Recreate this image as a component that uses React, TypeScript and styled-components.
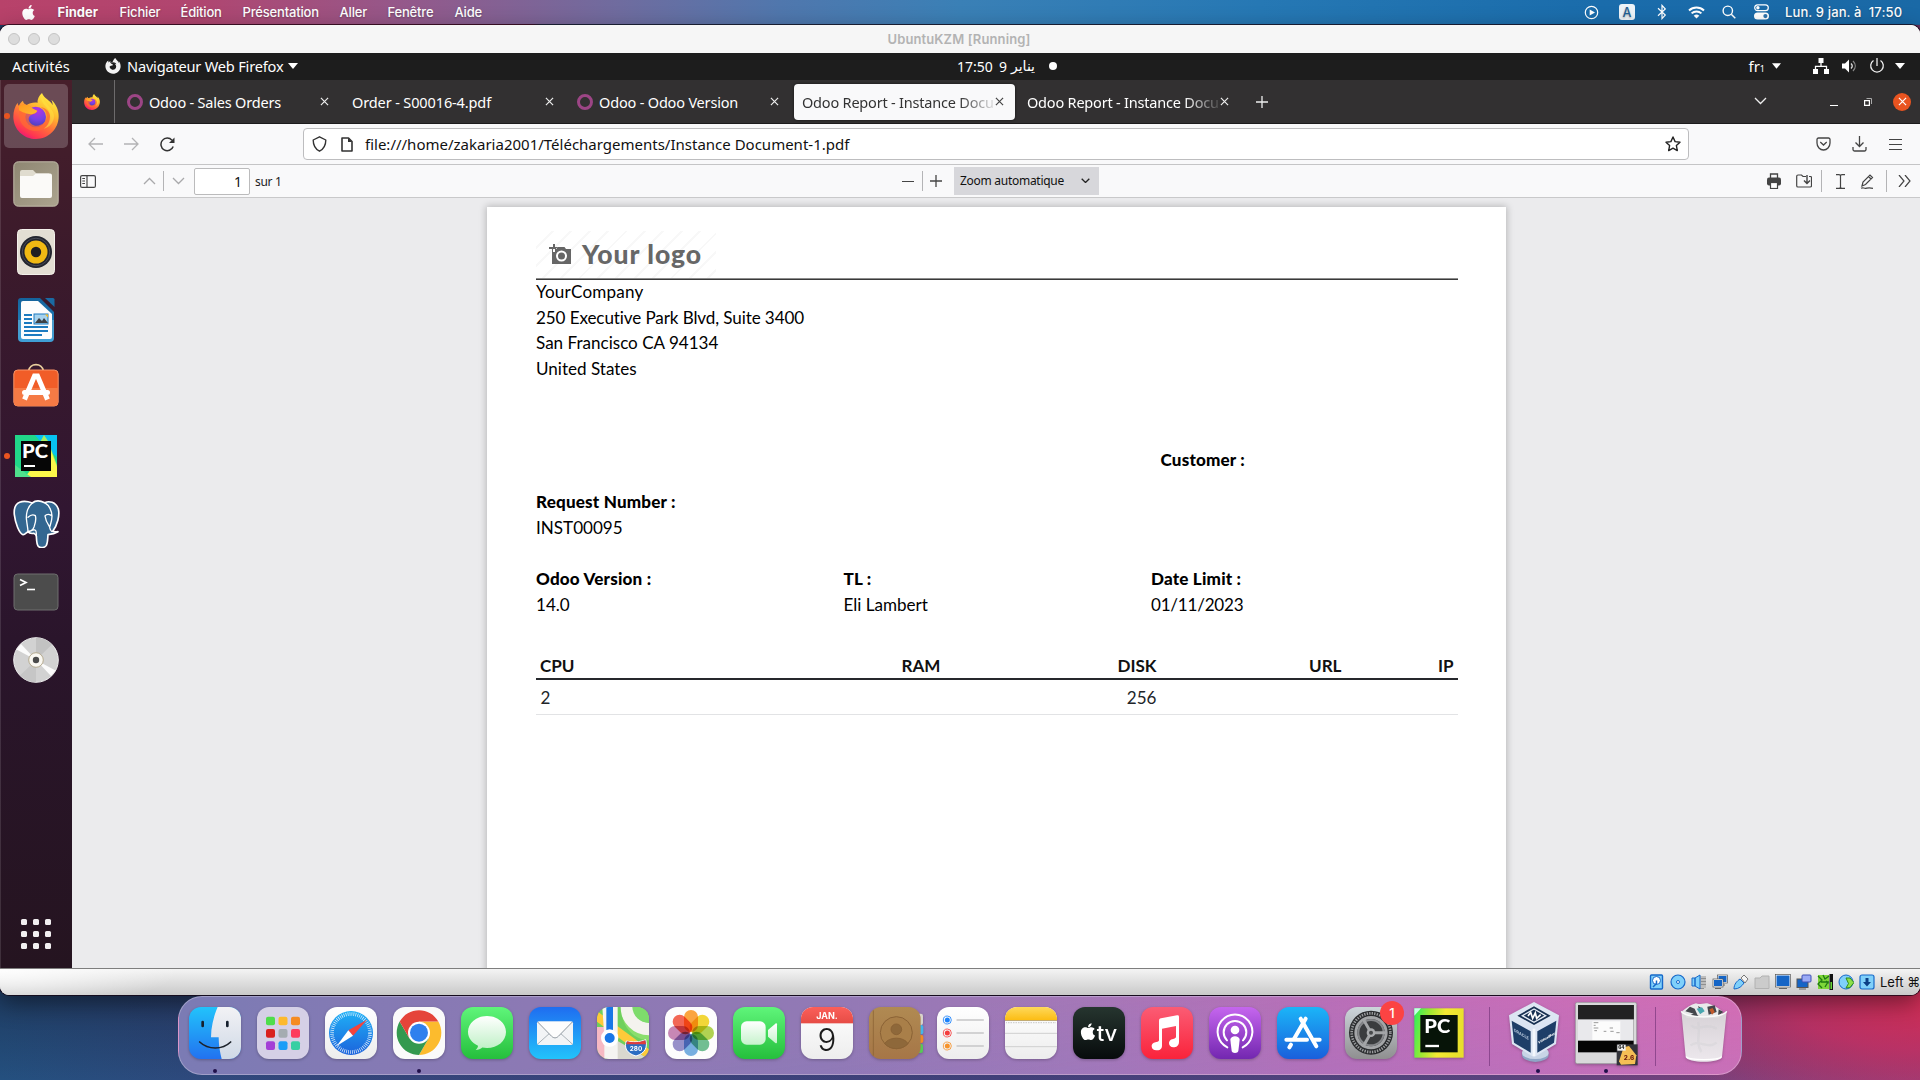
import React from 'react';
import styled, { createGlobalStyle, css } from 'styled-components';
import { FaApple, FaFirefoxBrowser } from 'react-icons/fa';

const mac = `Inter, "Liberation Sans", sans-serif`;
const ubuntu = `"Noto Sans", "Open Sans", sans-serif`;
const lato = `Lato, "Open Sans", sans-serif`;

const Global = createGlobalStyle`
  * { box-sizing: border-box; }
  body { margin: 0; background: #2b3560; overflow: hidden; }
  svg { display: block; flex: none; }
`;

/* ---------- shared pieces ---------- */

const Desktop = styled.div`
  width: 1920px;
  height: 1080px;
  overflow: hidden;
  display: flex;
  flex-direction: column;
  background:
    radial-gradient(330px 110px at 1935px 1000px, #d42e56 0%, rgba(205, 47, 98, 0.75) 45%, rgba(205, 47, 98, 0) 100%),
    linear-gradient(180deg, rgba(20, 20, 40, 0.35) 990px, rgba(20, 20, 40, 0) 1080px),
    linear-gradient(90deg, #24507f 0, #33467c 300px, #41407a 1000px, #5a447f 1500px, #7c417c 1740px, #8f3f78 1920px);
`;

const Label = styled.span<{ $w?: number; $size: number; $ls?: number; $weight?: number; $color?: string; $ml?: number; $font?: string }>`
  flex: none;
  display: block;
  white-space: nowrap;
  font-family: ${(p) => p.$font ?? ubuntu};
  font-size: ${(p) => p.$size}px;
  font-weight: ${(p) => p.$weight ?? 400};
  letter-spacing: ${(p) => p.$ls ?? 0}px;
  color: ${(p) => p.$color ?? '#fff'};
  margin-left: ${(p) => p.$ml ?? 0}px;
  ${(p) => p.$w && css`width: ${p.$w}px;`}
`;

const Glyph = styled.span<{ $w: number; $ml?: number }>`
  flex: none;
  width: ${(p) => p.$w}px;
  margin-left: ${(p) => p.$ml ?? 0}px;
  display: flex;
  align-items: center;
  justify-content: center;
`;

const Spacer = styled.div<{ $w?: number }>`
  flex: ${(p) => (p.$w ? 'none' : 1)};
  ${(p) => p.$w && css`width: ${p.$w}px;`}
`;

const Draw = ({ w, h = w, vb, children }: { w: number; h?: number; vb?: string; children: React.ReactNode }) => (
  <svg width={w} height={h} viewBox={vb ?? `0 0 ${w} ${h}`} fill="none">
    {children}
  </svg>
);

/* ---------- mac menu bar ---------- */

const MacBar = styled.header`
  height: 25px;
  flex: none;
  display: flex;
  align-items: center;
  padding: 0 17px 1px 20px;
  color: #fff;
  text-shadow: 0 1px 2px rgba(0, 0, 0, 0.3);
  background:
    linear-gradient(90deg, #b92b4e 0, #a72a55 532px, #2c7393 540px, #1f5f92 1920px) 0 24px / 100% 1px no-repeat,
    linear-gradient(90deg, #b8426a 0, #b04670 200px, #95588a 400px, #6f6c9f 620px, #5077ad 780px, #3a80b6 960px, #2678b4 1260px, #1a6cab 1600px, #1a69a6 1920px);
`;
const MenuItem = styled.span<{ $w: number; $strong?: boolean; $first?: boolean }>`
  flex: none;
  width: ${(p) => p.$w}px;
  margin-left: ${(p) => (p.$strong ? 21.5 : 0)}px;
  white-space: nowrap;
  font-family: ${mac};
  font-size: 13px;
  font-weight: ${(p) => (p.$strong ? 700 : 500)};
  letter-spacing: ${(p) => (p.$strong ? 0 : -0.18)}px;
`;

const MacBarIcons = () => (
  <>
    <Glyph $w={16}>
      <Draw w={15}>
        <circle cx="7.5" cy="7.5" r="6.2" stroke="#fff" strokeWidth="1.2" />
        <path d="M5.7 4.5 11 7.5 5.7 10.5z" fill="#fff" />
      </Draw>
    </Glyph>
    <Glyph $w={16} $ml={20}>
      <Draw w={16}>
        <rect width="16" height="16" rx="3" fill="#eef4f9" />
        <text x="8" y="12.6" textAnchor="middle" fontSize="12.5" fontWeight="500" fontFamily="Inter, sans-serif" fill="#1f5f93">A</text>
      </Draw>
    </Glyph>
    <Glyph $w={16} $ml={19}>
      <Draw w={10} h={16}>
        <path d="M1 4.3 8.3 11 5 14.6V1.4L8.3 5 1 11.7" stroke="#fff" strokeWidth="1.2" />
      </Draw>
    </Glyph>
    <Glyph $w={18} $ml={17}>
      <Draw w={17} h={13}>
        <path d="M1 4.4a11 11 0 0 1 15 0" stroke="#fff" strokeWidth="2" />
        <path d="M3.6 7.4a7 7 0 0 1 9.800 0" stroke="#fff" strokeWidth="2" />
        <path d="M5.700 9.700a4.200 4.200 0 0 1 5.600 0L8.500 12.600z" fill="#fff" />
      </Draw>
    </Glyph>
    <Glyph $w={16} $ml={16}>
      <Draw w={14}>
        <circle cx="5.8" cy="5.8" r="4.7" stroke="#fff" strokeWidth="1.4" />
        <path d="m9.300 9.300 4 4" stroke="#fff" strokeWidth="1.5" />
      </Draw>
    </Glyph>
    <Glyph $w={16} $ml={16}>
      <Draw w={15} h={16}>
        <rect x=".7" y=".9" width="13.6" height="5.8" rx="2.9" stroke="#fff" strokeWidth="1.2" />
        <circle cx="3.9" cy="3.8" r="1.7" fill="#fff" />
        <rect y="8.6" width="15" height="7" rx="3.5" fill="#fff" />
        <circle cx="11.4" cy="12.1" r="2.1" fill="#2f74ad" />
      </Draw>
    </Glyph>
  </>
);

/* ---------- VM window ---------- */

const VmWindow = styled.section`
  flex: none;
  height: 970px;
  display: flex;
  flex-direction: column;
  border-radius: 9px;
  overflow: hidden;
  background: #fff;
  box-shadow: 0 0 0 1px rgba(20, 5, 20, 0.75), 0 8px 24px rgba(0, 0, 0, 0.45);
`;

const TitleBar = styled.div`
  height: 28px;
  flex: none;
  display: grid;
  grid-template-columns: 1fr auto 1fr;
  align-items: center;
  padding: 0 10px 1px 8px;
  background: #f6f6f6;
`;

const Lights = styled.div`
  display: flex;
  gap: 8px;
`;
const Light = styled.i`
  width: 12px;
  height: 12px;
  border-radius: 50%;
  background: #dddddd;
  border: 1px solid #c4c4c4;
`;

const GnomeBar = styled.div`
  height: 27px;
  flex: none;
  display: grid;
  grid-template-columns: 1fr auto 1fr;
  align-items: center;
  padding-bottom: 1px;
  background: #1d1d1d;
`;
const GnomeSide = styled.div<{ $end?: boolean }>`
  display: flex;
  align-items: center;
  justify-content: ${(p) => (p.$end ? 'flex-end' : 'flex-start')};
  padding: ${(p) => (p.$end ? '0 15px 0 0' : '0 0 0 12px')};
`;
const GnomeClock = styled.div`
  display: flex;
  align-items: center;
  padding-left: 94px;
`;
const LayoutIndex = styled.small`
  font-size: 9px;
`;

const Workspace = styled.div`
  flex: 1;
  min-height: 0;
  display: flex;
`;

const Launcher = styled.nav`
  width: 72px;
  flex: none;
  display: flex;
  flex-direction: column;
  align-items: center;
  gap: 4px;
  padding: 4px 0 2px;
  background: linear-gradient(180deg, #471f2b 0, #3b1a2b 180px, #311631 430px, #2a152b 560px, #251420 888px);
  box-shadow: inset 1px 0 0 rgba(255, 255, 255, 0.12);
`;
const LauncherTile = styled.div<{ $active?: boolean; $running?: boolean; $lift?: number }>`
  position: relative;
  width: 64px;
  height: 64px;
  border-radius: 5px;
  display: grid;
  place-items: center;
  padding-bottom: ${(p) => p.$lift ?? 0}px;
  background: ${(p) => (p.$active ? 'rgba(255,255,255,.2)' : 'transparent')};
  ${(p) =>
    p.$running &&
    css`
      &::before {
        content: '';
        position: absolute;
        left: 0;
        top: 29px;
        width: 6px;
        height: 6px;
        border-radius: 50%;
        background: #e95420;
      }
    `}
`;
const AppsGrid = styled.div`
  display: grid;
  grid-template-columns: repeat(3, 6px);
  gap: 6px;
  margin-bottom: 17px;
`;
const AppsDot = styled.i`
  height: 6px;
  border-radius: 1.5px;
  background: #f2eff1;
`;

const Browser = styled.div`
  flex: 1;
  min-width: 0;
  display: flex;
  flex-direction: column;
`;

const TabStrip = styled.div`
  height: 44px;
  flex: none;
  display: flex;
  align-items: center;
  padding-right: 9px;
  background: #323031;
  border-bottom: 1px solid #1c1b1c;
`;
const PinnedTab = styled.div`
  width: 43px;
  align-self: stretch;
  display: flex;
  align-items: center;
  padding-left: 12px;
  border-right: 1px solid #6d6b6c;
`;
const Tab = styled.div<{ $active?: boolean }>`
  width: ${(p) => (p.$active ? 221 : 225)}px;
  height: 36px;
  flex: none;
  display: flex;
  align-items: center;
  margin-left: ${(p) => (p.$active ? 4 : 0)}px;
  padding: 0 11px 0 ${(p) => (p.$active ? 8 : 12)}px;
  border-radius: 4px;
  background: ${(p) => (p.$active ? '#f9f9fa' : 'transparent')};
  box-shadow: ${(p) => (p.$active ? '0 0 3px rgba(0,0,0,.6)' : 'none')};
`;
const TabTitle = styled.div<{ $fade?: boolean }>`
  flex: 1;
  min-width: 0;
  ${(p) => p.$fade && css`mask-image: linear-gradient(90deg, #000 calc(100% - 36px), rgba(0, 0, 0, 0.15) calc(100% - 2px));`}
`;
const OdooRing = styled.i`
  width: 16px;
  height: 16px;
  flex: none;
  margin-right: 6px;
  border: 3.5px solid #9c4585;
  border-radius: 50%;
`;
const CloseDisc = styled.span`
  width: 18px;
  height: 18px;
  border-radius: 50%;
  display: grid;
  place-items: center;
  background: #e95420;
`;

const NavBar = styled.div`
  height: 41px;
  flex: none;
  display: flex;
  align-items: center;
  padding-right: 17px;
  background: #f9f9fa;
  border-bottom: 1px solid #c5c5c6;
`;
const UrlField = styled.div`
  width: 1386px;
  height: 32px;
  margin-left: 128px;
  display: flex;
  align-items: center;
  padding: 0 7px;
  background: #fff;
  border: 1px solid #bdbdbf;
  border-radius: 4px;
`;

const PdfBar = styled.div`
  height: 33px;
  flex: none;
  display: flex;
  align-items: center;
  padding-right: 9px;
  background: #f9f9fa;
  border-bottom: 1px solid #c9c9ca;
`;
const Rule = styled.i<{ $ml: number; $h?: number }>`
  width: 1px;
  height: ${(p) => p.$h ?? 20}px;
  margin-left: ${(p) => p.$ml}px;
  background: #b4b4b6;
`;
const PageInput = styled.div`
  width: 56px;
  height: 27px;
  margin-left: 9px;
  display: flex;
  align-items: center;
  justify-content: flex-end;
  padding-right: 7px;
  border: 1px solid #bbbbbc;
  border-radius: 2px;
  background: #fff;
`;
const ZoomSelect = styled.div`
  width: 145px;
  height: 28px;
  margin-left: 12px;
  display: flex;
  align-items: center;
  justify-content: space-between;
  padding: 0 9px 1px 6px;
  background: #d7d7db;
`;

const Viewer = styled.div`
  flex: 1;
  min-height: 0;
  overflow: hidden;
  padding: 9px 0 0 415px;
  background: #ebebed;
`;
const Sheet = styled.article`
  width: 1019px;
  height: 1400px;
  padding: 24px 48px 0 49px;
  background: #fff;
  box-shadow: 0 0 7px 1px rgba(0, 0, 0, 0.22);
`;
const LogoBox = styled.div`
  width: 180px;
  height: 47px;
  display: flex;
  align-items: center;
  padding: 0 0 2px 13px;
  background: repeating-linear-gradient(135deg, #fff 0 11px, #f8f8f8 11px 13px);
`;
const Divider = styled.hr`
  width: 922px;
  margin: 0 0 -1px;
  border: 0;
  height: 2px;
  background: linear-gradient(180deg, #8c8c8c 50%, #3a3a3a 50%);
`;
const DocLine = styled.p<{ $bold?: boolean; $ls?: number }>`
  margin: 0;
  height: 25.6px;
  line-height: 25.6px;
  white-space: nowrap;
  font-family: ${lato};
  font-size: 17.07px;
  font-weight: ${(p) => (p.$bold ? 900 : 400)};
  font-variant-ligatures: none;
  letter-spacing: ${(p) => p.$ls ?? (p.$bold ? 0.18 : 0)}px;
  color: #000;
`;
const CustomerRow = styled.div`
  margin: 66px 0 0 624.5px;
`;
const RequestRow = styled.div`
  margin-top: 16px;
`;
const InfoGrid = styled.div`
  margin-top: 26px;
  display: grid;
  grid-template-columns: 307.5px 307.5px 1fr;
`;
const SpecTable = styled.table`
  width: 922px;
  margin-top: 32px;
  border-collapse: collapse;
  table-layout: fixed;
  font-family: ${lato};
  font-size: 17.07px;
  color: #111;
`;
const Th = styled.th<{ $w: number; $left?: boolean }>`
  width: ${(p) => p.$w}px;
  height: 30px;
  padding: 0 ${(p) => (p.$left ? 4 : 4.5)}px;
  text-align: ${(p) => (p.$left ? 'left' : 'right')};
  vertical-align: bottom;
  font-weight: 700;
  line-height: 24px;
  border-bottom: 2px solid #26282c;
`;
const Td = styled.td<{ $left?: boolean }>`
  height: 35px;
  padding: 0 4.5px;
  text-align: ${(p) => (p.$left ? 'left' : 'right')};
  border-bottom: 1px solid #e2e3e5;
  color: #212529;
`;

const StatusBar = styled.footer`
  height: 27px;
  flex: none;
  display: flex;
  align-items: center;
  justify-content: flex-end;
  gap: 5px;
  padding-right: 1px;
  border-top: 1px solid #7e7e7e;
  background:
    radial-gradient(180px 40px at 0 0, rgba(255, 255, 255, 0.9), rgba(255, 255, 255, 0)),
    linear-gradient(180deg, #f4f4f4, #c9c9c9);
`;

/* ---------- colour app icons ---------- */

const FirefoxLogo = ({ size }: { size: number }) => (
  <Draw w={size} vb="0 0 138 138">
    <defs>
      <linearGradient id="ffBody" x1="0.8" y1="0.05" x2="0.25" y2="1">
        <stop offset="0" stopColor="#fff044" />
        <stop offset=".3" stopColor="#ffbd2f" />
        <stop offset=".58" stopColor="#ff7139" />
        <stop offset=".85" stopColor="#ff3750" />
        <stop offset="1" stopColor="#e8117f" />
      </linearGradient>
      <radialGradient id="ffGlobe" cx=".6" cy=".2" r=".9">
        <stop offset="0" stopColor="#b833e1" />
        <stop offset=".5" stopColor="#7542e5" />
        <stop offset="1" stopColor="#3b3fa5" />
      </radialGradient>
      <linearGradient id="ffFox" x1="0" y1="0" x2="1" y2="1">
        <stop offset="0" stopColor="#ff9a1f" />
        <stop offset="1" stopColor="#ffb92e" />
      </linearGradient>
    </defs>
    <path d="M87 0c-8 7-15 20-13 29-12-2-25 1-33 7-7-2-11-9-11-13-5 3-10 9-12 15-3-2-4-6-4-9C6 39 1 54 1 71c0 38 31 67 68 67 38 0 68-30 68-68 0-21-9-38-22-50 3 6 4 12 4 17C113 22 92 16 87 0Z" fill="url(#ffBody)" />
    <circle cx="68" cy="72" r="31" fill="url(#ffGlobe)" />
    <path d="M20 40c9-7 18-6 22-3 8 1 13 5 15 9 5 4 12 5 15 8-2 7-10 9-17 12-6 3-9 8-8 14 2 10 12 18 24 18 17 0 30-12 30-28 0-12-8-22-18-27 17 1 28 15 29 30 1 24-19 41-43 41-27 0-47-17-50-41-2-12-1-23 1-33Z" fill="#ff6a34" fillOpacity=".75" />
    <path d="M18 39c8-5 17-6 24-3 9 1 14 6 16 10 5 4 12 5 15 8-3 6-10 8-17 10-8 0-22-3-38-12Z" fill="url(#ffFox)" />
    <path d="M85 3c-3 14 2 25 11 35 14 14 19 28 12 48-3 10-10 17-16 21 18-3 31-19 31-37 0-26-32-36-38-67Z" fill="#ffe141" fillOpacity=".55" />
  </Draw>
);

const FilesIcon = () => (
  <Draw w={46}>
    <defs>
      <linearGradient id="files" x1="0" y1="0" x2="1" y2="1">
        <stop stopColor="#8e8672" /><stop offset="1" stopColor="#aca48f" />
      </linearGradient>
    </defs>
    <rect x=".8" y=".8" width="44.4" height="44.4" rx="4.5" fill="url(#files)" stroke="#c0baa8" />
    <path d="M7 11a2 2 0 0 1 2-2h11l3.500 3.500H36v10H7z" fill="#e0dccf" />
    <path d="M7 15h13l3-2.500h14a2 2 0 0 1 2 2V35a2 2 0 0 1-2 2H9a2 2 0 0 1-2-2z" fill="#fbfaf8" />
  </Draw>
);

const RhythmIcon = () => (
  <Draw w={38} h={46}>
    <rect x=".5" y=".5" width="37" height="45" rx="4" fill="#e3ded3" stroke="#f3f0ea" />
    <circle cx="19" cy="23" r="16" fill="#23252e" />
    <circle cx="19" cy="23" r="13.800" fill="none" stroke="#4a4c57" strokeWidth="1" />
    <circle cx="19" cy="23" r="11.500" fill="#f0b913" />
    <circle cx="19" cy="23" r="5.200" fill="#1f1f22" />
  </Draw>
);

const WriterIcon = () => (
  <Draw w={38} h={46}>
    <defs>
      <linearGradient id="writer" x1="0" y1="0" x2="0" y2="1">
        <stop stopColor="#14639c" /><stop offset=".5" stopColor="#1f7ab5" /><stop offset=".5" stopColor="#4b9ccb" /><stop offset="1" stopColor="#3f9fd6" />
      </linearGradient>
    </defs>
    <path d="M4 1h19l14 14v26a4 4 0 0 1-4 4H5a4 4 0 0 1-4-4V4a3 3 0 0 1 3-3z" fill="url(#writer)" />
    <path d="M28 1h8a1.500 1.500 0 0 1 1.500 1.500V10z" fill="#1a6aa3" />
    <path d="M6 4h15l14 13v23a2 2 0 0 1-2 2H6a2 2 0 0 1-2-2V6a2 2 0 0 1 2-2z" fill="#fdfdfd" />
    <path d="M7 18h8M7 22h8M7 26h8M7 30h24M7 34h24M7 38h18" stroke="#1c7bc0" strokeWidth="1.800" />
    <rect x="17" y="17" width="14" height="10" fill="#a6d3ee" stroke="#1c7bc0" />
    <path d="m18 26 4-5 3 3 2-3 4 5z" fill="#3d4145" />
    <path d="M28 17.500h3v3z" fill="#f5b921" />
  </Draw>
);

const SoftwareIcon = () => (
  <Draw w={46}>
    <path d="M15.500 9a7.600 7.600 0 0 1 15 0" stroke="#e9cf9e" strokeWidth="1.800" />
    <rect x=".8" y="8" width="44.400" height="36" rx="4" fill="#f15d28" stroke="#f79367" />
    <path d="M1 26h44v14a4 4 0 0 1-4 4H5a4 4 0 0 1-4-4z" fill="#f57a45" />
    <path d="M11.500 37.500 21.500 14h3L34.500 37.500" stroke="#fff" strokeWidth="5" />
    <path d="M17.500 33h11v6h-11z" fill="#f57a45" />
    <rect x="9" y="28" width="28" height="5" rx="2.500" fill="#fff" />
  </Draw>
);

const PyCharmUbuntu = () => (
  <Draw w={42}>
    <rect width="42" height="42" fill="#21d789" />
    <path d="M20 0h22v22L30 12z" fill="#07c3f2" />
    <path d="M29 0 18 20l24 18V30L33 6z" fill="#a8ee60" />
    <path d="M33 8 42 32v10H10l16-20z" fill="#fcf84a" />
    <path d="M0 30 16 42H0z" fill="#4fe08c" />
    <rect x="6" y="6" width="30" height="30" fill="#060606" />
    <text x="7" y="22.800" fontFamily="Lato, sans-serif" fontWeight="900" fontSize="18.500" textLength="26" lengthAdjust="spacingAndGlyphs" fill="#fff">PC</text>
    <path d="M9 31h11" stroke="#fff" strokeWidth="2" />
  </Draw>
);

const Postgres = () => (
  <Draw w={47} h={48} vb="0 0 141 144">
    <path d="M20 7C8 12 2 24 4 44c3 25 14 56 26 60 5 1 10-6 15-9 3 4 11 6 17 5 4 2 8 4 8 8 1 10 0 24 6 31 7 7 20 4 24-3 5-10 4-24 5-32 9-1 20-3 30-9-6 0-11 1-16-1 14-19 22-48 17-67C128 5 108 2 95 8 78 0 65 3 58 9 44 4 30 3 20 7Z" fill="#336791" stroke="#fff" strokeWidth="5" strokeLinejoin="round" />
    <path d="M58 9C42 22 38 45 41 63c1 10 4 24 4 32M45 52c8-8 16-9 22-5 4 12 0 22-4 34-4 10-9 14-18 12M95 8c14 8 22 26 22 41 0 14-6 26-7 34 1 6 3 9 7 12M117 48c-6-6-16-7-21 0 2 16 8 24 14 33M70 108c-1-10 2-15-4-18-7-2-13 4-21 6" stroke="#fff" strokeWidth="4" strokeLinecap="round" />
  </Draw>
);

const TerminalIcon = () => (
  <Draw w={46} h={38}>
    <rect x="1" y="1" width="44" height="36" rx="3.500" fill="#4c4c4c" stroke="#6e6e6e" />
    <path d="m7 6.500 6 3-6 3" stroke="#fff" strokeWidth="1.700" />
    <path d="M14 16.500h8" stroke="#fff" strokeWidth="1.600" />
  </Draw>
);

const DiscIcon = () => (
  <Draw w={46}>
    <circle cx="23" cy="23" r="22.300" fill="#d2d2d2" stroke="#eee" />
    <path d="M23 23V.700A22 22 0 0 1 39 7.500z" fill="#c2c2c2" />
    <path d="M23 23v22.300A22 22 0 0 1 7 38.500z" fill="#c6c6c6" />
    <path d="M23 23 3.500 12.500 8 7zM23 23l19.500 10.500L38 39z" fill="#fbfbfb" />
    <circle cx="23" cy="23" r="7.300" fill="#faf8f2" stroke="#b6ab90" />
    <circle cx="23" cy="23" r="3.200" fill="#4b4b4b" />
  </Draw>
);

/* ---------- mac dock ---------- */

const DockArea = styled.div`
  flex: 1;
  display: flex;
  justify-content: flex-start;
  padding: 1px 0 5px 178px;
`;
const DockShelf = styled.div`
  width: 1563.5px;
  height: 79px;
  display: flex;
  align-items: flex-start;
  padding: 10px 0 0 10px;
  border: 1px solid rgba(255, 255, 255, 0.28);
  border-radius: 24px;
  background: linear-gradient(172deg, rgba(0, 0, 0, 0) 40%, rgba(90, 130, 220, 0.18)), linear-gradient(92deg, #7b7bb4 0, #8c79b4 350px, #9279b5 650px, #a577b7 900px, #bd6eb6 1150px, #cf6cb5 1350px, #e06bb0 1563px);
`;
const DockSlot = styled.div<{ $dot?: number; $ml?: number; $raise?: number }>`
  position: relative;
  width: 52px;
  height: 60px;
  flex: none;
  margin-left: ${(p) => p.$ml ?? 16}px;
  &:first-child { margin-left: 0; }
  & > svg {
    overflow: visible;
    margin-top: ${(p) => -(p.$raise ?? 0)}px;
    filter: drop-shadow(0 1px 1.5px rgba(0, 0, 0, 0.25));
  }
  ${(p) =>
    p.$dot &&
    css`
      &::after {
        content: '';
        position: absolute;
        left: ${p.$dot}px;
        top: 62px;
        width: 4px;
        height: 4px;
        border-radius: 50%;
        background: #20104a;
      }
    `}
`;
const DockRule = styled.i<{ $ml: number }>`
  flex: none;
  width: 1px;
  height: 59px;
  margin-left: ${(p) => p.$ml}px;
  background: rgba(100, 40, 110, 0.55);
`;
const Badge = styled.span`
  position: absolute;
  right: -7px;
  top: -6px;
  width: 24px;
  height: 24px;
  border-radius: 50%;
  display: grid;
  place-items: center;
  background: #fb4343;
  font: 500 13px ${mac};
  color: #fff;
`;

const grads: [string, string, string][] = [
  ['gFinder', '#22c3fb', '#2272f0'], ['gFace', '#f2f2f5', '#cfd9e6'], ['gSafari', '#1fb0f6', '#1c63dc'],
  ['gGreen', '#5ff57a', '#25bf3c'], ['gMail', '#1f6df0', '#22c3fb'], ['gWhite', '#ffffff', '#ededed'],
  ['gNotes', '#fed95b', '#fcbc12'], ['gTv', '#26352f', '#070b0c'], ['gMusic', '#fb5c74', '#fa233b'],
  ['gPod', '#c566ee', '#7327b0'], ['gStore', '#1bb5f8', '#1a5fdc'], ['gGrey', '#ccd5da', '#8f8f90'],
  ['gBubble', '#ffffff', '#bdf0c4'], ['gCam', '#ffffff', '#c6f3cc'], ['gBrown', '#b08a52', '#a67647'],
  ['gRed', '#fb5f5a', '#e64c45'], ['gTrash', '#d9d9da', '#f1f1f2'],
];
const DefsHolder = styled.svg`
  position: absolute;
`;
const GradientDefs = () => (
  <DefsHolder width="0" height="0">
    <defs>
      {grads.map(([id, a, b]) => (
        <linearGradient key={id} id={id} x1="0" y1="0" x2="0" y2="1">
          <stop stopColor={a} />
          <stop offset="1" stopColor={b} />
        </linearGradient>
      ))}
      <clipPath id="squircle"><rect width="156" height="156" rx="36" /></clipPath>
    </defs>
  </DefsHolder>
);
const App156 = ({ fill, children }: { fill: string; children: React.ReactNode }) => (
  <Draw w={52} vb="0 0 156 156">
    <g clipPath="url(#squircle)">
      <rect width="156" height="156" fill={fill} />
      {children}
    </g>
  </Draw>
);

const Finder = () => (
  <App156 fill="url(#gFinder)">
    <path d="M86 0C74 28 66 60 66 91h23c0 24 4 46 9 65h58V0z" fill="url(#gFace)" />
    <path d="M41 45v12M115 45v12" stroke="#16202e" strokeWidth="8" strokeLinecap="round" />
    <path d="M32 105c26 24 68 24 93 0" stroke="#1d222b" strokeWidth="5" strokeLinecap="round" />
  </App156>
);
const padColors = ['#4fdd4c', '#fdb92d', '#f58b23', '#d9201f', '#a4acb1', '#fd3c5d', '#a33fd6', '#1c9df7', '#36cfa3'];
const Launchpad = () => (
  <App156 fill="#d5d0e6">
    {padColors.map((c, i) => (
      <rect key={c} x={27 + (i % 3) * 37.5} y={29 + Math.floor(i / 3) * 37} width="27" height="26" rx="6" fill={c} />
    ))}
  </App156>
);
const Safari = () => (
  <App156 fill="url(#gWhite)">
    <circle cx="78" cy="78" r="66" fill="url(#gSafari)" />
    <circle cx="78" cy="78" r="57" stroke="#fff" strokeWidth="11" strokeDasharray="2.200 3.770" strokeOpacity=".85" />
    <path d="M126 38 84 86 70 70z" fill="#f4433c" />
    <path d="M35 117 70 70l14 16z" fill="#fff" />
  </App156>
);
const Chrome = () => (
  <App156 fill="#fafafa">
    <path d="M78 43.500h58a67 67 0 0 1-58 100.500l29-50z" fill="#fcbb2d" />
    <path d="M49 93.500 20 43.500A67 67 0 0 0 78 144l29-50.500z" fill="#34994f" />
    <path d="M20 43.500A67 67 0 0 1 136 43.500H78L49 93.500z" fill="#e5443a" />
    <circle cx="78" cy="77" r="33" fill="#fff" />
    <circle cx="78" cy="77" r="27" fill="#2f80ee" />
  </App156>
);
const Messages = () => (
  <App156 fill="url(#gGreen)">
    <path d="M78 27c32 0 57 21 57 48s-25 48-57 48c-5 0-10-.500-14-1.500-5 5-12 7.500-20 7.500 4-4 7-8 7-13-18-8-30-23-30-41 0-27 25-48 57-48z" fill="url(#gBubble)" />
  </App156>
);
const Mail = () => (
  <App156 fill="url(#gMail)">
    <rect x="24" y="43" width="108" height="71" rx="6" fill="#f2f4f6" />
    <path d="m25 112 40-36M131 112 91 76" stroke="#9aa3ab" strokeWidth="2.500" />
    <path d="m26 45 42 43c6 6 14 6 20 0l42-43" fill="#fdfdfd" stroke="#8e979f" strokeWidth="3" />
  </App156>
);
const Maps = () => (
  <App156 fill="#6fd05c">
    <path d="M72 0c0 60 40 100 84 100V0z" fill="#8ade6d" />
    <path d="M90 0a66 66 0 0 0 66 66" stroke="#f4f3ee" strokeWidth="38" />
    <path d="M106 0a50 50 0 0 0 50 48V0z" fill="#7edc6c" />
    <path d="M0 60h26v96H0z" fill="#f6b9c3" />
    <path d="M58 100l98 56H58z" fill="#dad8cf" />
    <path d="M-6 24 160 146" stroke="#fdca3a" strokeWidth="26" />
    <path d="M16 0h46v156H22V90z" fill="#f5f4f1" />
    <path d="M28 0h20v84H28z" fill="#1977e6" />
    <circle cx="38" cy="93" r="26" fill="#fff" />
    <circle cx="38" cy="93" r="15" fill="#1977e6" />
    <path d="M88 102c18 4 40 4 58-4 6 22 0 40-29 49-29-8-36-25-29-45z" fill="#2b6dc2" stroke="#fff" strokeWidth="3" />
    <path d="M90 103c18 4 38 4 55-3l2 12H88z" fill="#e23c3c" />
    <text x="117" y="132" textAnchor="middle" fontFamily="Inter, sans-serif" fontWeight="700" fontSize="19" fill="#fff">280</text>
  </App156>
);
const Petal = styled.rect`
  mix-blend-mode: multiply;
`;
const petals = ['#fd9a24', '#f2d31c', '#a7ce3a', '#5fb784', '#66a6de', '#8a82c4', '#c277ad', '#f2533f'];
const Photos = () => (
  <App156 fill="#fdfdfd">
    {petals.map((c, i) => (
      <Petal key={c} x="57" y="9" width="42" height="66" rx="21" fill={c} fillOpacity=".88" transform={`rotate(${i * 45} 78 78)`} />
    ))}
  </App156>
);
const FaceTime = () => (
  <App156 fill="url(#gGreen)">
    <rect x="24" y="43" width="74" height="70" rx="17" fill="url(#gCam)" />
    <path d="M105 69 127 50c3-2 5-1 5 2v54c0 3-2 4-5 2l-22-19z" fill="url(#gCam)" />
  </App156>
);
const Calendar = () => (
  <App156 fill="url(#gWhite)">
    <rect width="156" height="49" fill="url(#gRed)" />
    <text x="78" y="36" textAnchor="middle" fontFamily="Inter, sans-serif" fontWeight="700" fontSize="27" fill="#fff">JAN.</text>
    <text x="78" y="131" textAnchor="middle" fontFamily="Inter, sans-serif" fontWeight="300" fontSize="94" fill="#1b1b1b">9</text>
  </App156>
);
const Contacts = () => (
  <Draw w={56} h={52} vb="0 0 168 156">
    <rect x="120" y="20" width="42" height="34" rx="6" fill="#d8d4cb" />
    <rect x="120" y="54" width="43" height="28" rx="6" fill="#43b5ea" />
    <rect x="120" y="84" width="43" height="24" rx="6" fill="#f28a25" />
    <rect x="120" y="110" width="42" height="28" rx="6" fill="#57c758" />
    <rect width="155" height="156" rx="36" fill="url(#gBrown)" />
    <path d="M13 10v136" stroke="#8d6536" strokeWidth="2.500" />
    <g stroke="#8a6235" strokeWidth="3">
      <circle cx="82" cy="77" r="48" fill="#a97f49" />
      <circle cx="82" cy="67" r="16" fill="#8e683a" />
      <path d="M47 110c12-22 58-22 70 0-18 20-52 20-70 0z" fill="#8e683a" />
    </g>
  </Draw>
);
const Reminders = () => (
  <App156 fill="url(#gWhite)">
    {['#1a82fb', '#f43d3d', '#f6932b'].map((c, i) => (
      <g key={c}>
        <circle cx="31" cy={39 + i * 39} r="7.500" fill={c} />
        <circle cx="31" cy={39 + i * 39} r="12" stroke={c} strokeWidth="2.500" />
        <path d={`M60 ${39 + i * 39}h79`} stroke="#c6c6c8" strokeWidth="4" strokeLinecap="round" />
      </g>
    ))}
  </App156>
);
const Notes = () => (
  <App156 fill="url(#gWhite)">
    <rect width="156" height="40" fill="url(#gNotes)" />
    <path d="M0 40.500h156" stroke="#a58c55" strokeWidth="2" />
    <path d="M4 47h150" stroke="#bdbdbd" strokeWidth="4" strokeDasharray="2 3" />
    <path d="M0 79h156M0 119h156" stroke="#c9c9c9" strokeWidth="2.500" />
  </App156>
);
const AppleTv = () => (
  <App156 fill="url(#gTv)">
    <g transform="translate(16 45)"><FaApple size={58} color="#fff" /></g>
    <text x="71" y="101" fontFamily="Inter, sans-serif" fontWeight="500" fontSize="64" textLength="62" lengthAdjust="spacingAndGlyphs" fill="#fff">tv</text>
  </App156>
);
const Music = () => (
  <App156 fill="url(#gMusic)">
    <path d="M54 114V42c0-5 2-7 6-8l48-9c4-1 6 1 6 5v74c0 12-8 17-17 17-8 0-13-5-13-12 0-9 7-13 15-14 5-1 6-3 6-7V57l-42 8v51c0 11-8 14-17 14-8 0-14-4-14-12 0-9 7-12 14-13 6-1 8-3 8-7z" fill="#fff" />
  </App156>
);
const Podcasts = () => (
  <App156 fill="url(#gPod)">
    <g stroke="#fff" strokeWidth="6" strokeLinecap="round">
      <path d="M55 121a52 52 0 1 1 46 0" />
      <path d="M54 100a34 34 0 1 1 48 0" />
    </g>
    <circle cx="78" cy="69" r="13" fill="#fff" />
    <path d="M64 98c0-14 28-14 28 0l-4 34c-1 8-19 8-20 0z" fill="#fff" />
  </App156>
);
const AppStore = () => (
  <App156 fill="url(#gStore)">
    <g stroke="#fff" strokeWidth="12" strokeLinecap="round">
      <path d="M86 35 51 96" /><path d="m71 35 47 83" /><path d="M28 98h62M112 98h16" /><path d="m42 113-5 8" />
    </g>
  </App156>
);
const Settings = () => (
  <App156 fill="url(#gGrey)">
    <circle cx="78" cy="77" r="66" fill="#2a2c2e" />
    <circle cx="78" cy="77" r="58" stroke="#9b9d9f" strokeWidth="8" strokeDasharray="4 3.600" />
    <circle cx="78" cy="77" r="50" fill="#a3a5a7" />
    <circle cx="78" cy="77" r="41" fill="#3a3c3e" />
    <circle cx="78" cy="77" r="38" stroke="#85878a" strokeWidth="6" />
    <g stroke="#a3a5a7" strokeWidth="9"><path d="M78 77h48M78 77 54 35M78 77 54 119" /></g>
    <circle cx="78" cy="77" r="13" fill="#a9abad" /><circle cx="78" cy="77" r="6" fill="#47494b" />
  </App156>
);
const PyCharmDock = () => (
  <Draw w={52} vb="0 0 156 156">
    <defs>
      <linearGradient id="pyc" x1="0" y1=".1" x2="1" y2=".3">
        <stop stopColor="#2cf25a" /><stop offset=".3" stopColor="#9ee832" /><stop offset=".6" stopColor="#f3ea33" /><stop offset="1" stopColor="#e8df2c" />
      </linearGradient>
    </defs>
    <rect x="4" y="4" width="148" height="148" fill="url(#pyc)" />
    <path d="M4 4h20L4 26z" fill="#c8ffe6" />
    <rect x="22" y="24" width="112" height="112" fill="#071408" />
    <text x="34" y="78" fontFamily="Lato, sans-serif" fontWeight="900" fontSize="54" textLength="78" lengthAdjust="spacingAndGlyphs" fill="#fff">PC</text>
    <path d="M37 117h41" stroke="#fff" strokeWidth="7" />
  </Draw>
);
const VirtualBox = () => (
  <Draw w={52} h={62} vb="0 0 156 186">
    <ellipse cx="70" cy="158" rx="40" ry="22" fill="#8fa5c6" />
    <ellipse cx="70" cy="152" rx="40" ry="19" fill="#c8d4e6" />
    <path d="M66 0-9 40l9 86 66 40 66-40 9-86z" fill="#dce5f3" />
    <path d="M66 7 7 41l59 34 59-34z" fill="#dfe7f3" />
    <path d="M66 13 16 41l50 28 50-28z" fill="#183152" />
    <path d="M66 21 31 41l35 20 35-20z" stroke="#e6edf7" strokeWidth="4" />
    <path d="m48 42 8-11 6 18 8-16 4 16 12-11" stroke="#fff" strokeWidth="5" />
    <path d="m-1 56 57 32v64L6 122z" fill="#1e3e68" />
    <path d="M133 56 76 88v64l50-30z" fill="#1e3e68" />
    <path d="M66 80v82" stroke="#f3f7fc" strokeWidth="8" />
    <text x="0" y="0" transform="matrix(.87 .5 0 1 5 88)" fontFamily="Inter, sans-serif" fontWeight="700" fontSize="13" fill="#b9c9de">ORACLE</text>
    <text x="0" y="0" transform="matrix(.87 -.5 0 1 79 126)" fontFamily="Inter, sans-serif" fontWeight="800" fontSize="11" fill="#fff">VirtualBox</text>
  </Draw>
);
const MiniWindow = () => (
  <Draw w={66} h={64} vb="0 0 198 192">
    <rect x="1" y="1" width="184" height="184" rx="6" fill="#d9d9da" stroke="#8d8d90" strokeWidth="2" />
    <rect x="9" y="9" width="167" height="142" fill="#050505" />
    <rect x="9" y="9" width="167" height="43" fill="#222" />
    <rect x="9" y="52" width="167" height="64" fill="#e9e9ec" />
    <rect x="52" y="58" width="84" height="56" fill="#fcfcfc" />
    <path d="M56 62h14M56 70h6M56 78h14M58 86h8M104 78h10M86 88h8M106 88h10M124 92h10" stroke="#999" strokeWidth="3" />
    <rect x="125" y="127" width="63" height="63" fill="#33343b" />
    <path d="M132 178 146 136l16-4 22 28-4 26-42 2z" fill="#f5bf55" />
    <rect x="127" y="128" width="25" height="18" fill="#f2f2f2" />
    <text x="139" y="142" textAnchor="middle" fontFamily="Inter, sans-serif" fontWeight="800" fontSize="14" fill="#222">64</text>
    <text x="162" y="173" textAnchor="middle" fontFamily="Inter, sans-serif" fontWeight="800" fontSize="19" fill="#6d1d10">2.6</text>
  </Draw>
);
const Trash = () => (
  <Draw w={52} h={62} vb="0 0 156 186">
    <path d="M12 28c16-12 26-20 42-24 8 6 24-2 34 0 16 6 34 12 46 26l-12 18H26z" fill="#e8e9ea" />
    <path d="m22 28 14-14 14 6 8 18zM60 12l16 10-8 14zM88 14l22-4 6 20-24 8zM122 22l14 8-16 12zM36 40l16-8 12 12z" fill="#44464c" />
    <path d="m56 20 16-4 8 12-14 8z" fill="#48a7b0" />
    <path d="m94 22 10-4 6 12-8 8z" fill="#c25a2c" />
    <path d="M10 28c10 24 126 24 136 0l-14 136c-3 20-106 20-109 0z" fill="url(#gTrash)" fillOpacity=".94" />
    <path d="M10 28c10 22 126 22 136 0" stroke="#fafafa" strokeWidth="4" />
    <path d="M40 70c20 20 40-10 76 10M38 130c24-20 50 14 78-8M60 60c10 30-10 60 10 90" stroke="#c9cacd" strokeWidth="7" strokeOpacity=".3" />
    <path d="M24 164c10 12 98 12 107 0" stroke="#fff" strokeWidth="4" />
  </Draw>
);

/* ---------- small stroke icons ---------- */

const Cross = ({ c, s = 9 }: { c: string; s?: number }) => (
  <Draw w={s} vb="0 0 10 10"><path d="m1 1 8 8M9 1 1 9" stroke={c} strokeWidth="1.300" /></Draw>
);
const Caret = ({ w = 10, h = 6 }: { w?: number; h?: number }) => (
  <Draw w={w} h={h} vb="0 0 10 6"><path d="M0 0h10L5 6z" fill="#fff" /></Draw>
);
const Chevron = ({ c, w = 13, up }: { c: string; w?: number; up?: boolean }) => (
  <Draw w={w} h={w * 0.62} vb="0 0 13 8"><path d={up ? 'm1 7 5.500-5.500L12 7' : 'm1 1 5.500 5.500L12 1'} stroke={c} strokeWidth={17 / w} /></Draw>
);

const VmStatusIcons = () => {
  const b = '#1668c9';
  const l = '#7fd0fa';
  return (
    <>
      <Draw w={16}><rect x="1.500" y="1" width="12" height="14" rx="1" fill={l} stroke={b} strokeWidth="1.400" /><circle cx="7.500" cy="6.500" r="4" fill="#fff" stroke={b} /><path d="M7.500 6.500v3L4 13" stroke={b} strokeWidth="1.500" /></Draw>
      <Draw w={16}><circle cx="8" cy="8" r="7" fill={l} stroke={b} strokeWidth="1.200" /><circle cx="8" cy="8" r="1.500" fill="#fff" stroke={b} /></Draw>
      <Draw w={16}><path d="M9 2h6v12H7z" fill="#bdbdbd" /><path d="M10 4.500h5M10 7.500h5M10 10.500h5M8 14.500h5" stroke="#8f8f8f" /><path d="M1 4h3v8H1zM4 4l5-3v14l-5-3z" fill={l} stroke={b} /></Draw>
      <Draw w={16}><rect x="6" y="1.500" width="9" height="7" fill="#1565c6" stroke="#fff" /><rect x="5.500" y="1" width="10" height="8" stroke="#555" strokeWidth=".7" /><path d="M9 11h4" stroke="#666" /><rect x="1.500" y="5.500" width="9" height="7" fill="#1565c6" stroke="#fff" /><rect x="1" y="5" width="10" height="8" stroke="#555" strokeWidth=".7" /><path d="M3 14.500h6" stroke="#666" /></Draw>
      <Draw w={16}><path d="M1 15c0-5 3-8 6-10l4 4c-2 3-5 6-10 6z" fill={l} stroke={b} /><path d="m8 4 3-3 4 4-3 4z" fill="#f4f4f4" stroke="#777" /></Draw>
      <Draw w={16}><path d="M1 4h5l2-2h7v12.500H1z" fill="#cbcbcb" stroke="#b2b2b2" /></Draw>
      <Draw w={16}><rect x="1" y="1" width="14" height="11.500" fill="#1565c6" stroke="#fff" /><rect x=".5" y=".5" width="15" height="12.500" stroke="#555" strokeWidth=".7" /><path d="M4 14.500h8" stroke="#666" /></Draw>
      <Draw w={16}><rect x="1" y="5" width="11" height="8.500" fill="#1565c6" stroke="#555" /><rect x="6" y="1" width="9" height="7" rx="1" fill="#9aaaf5" stroke="#3f50b5" /><path d="M3 15h7" stroke="#666" /></Draw>
      <Draw w={16}><path d="M1 1h11v14H1z" fill="#7fd63a" /><path d="M1 2l4 4-4 4 4 4M6 1l2 4 4-3M4 8h7l-3 5M9 7l3 2" stroke="#1f7a12" strokeWidth="1.300" /><rect x="12.500" y="0" width="3.500" height="16" fill="#111" /><path d="M14.200 8v7" stroke="#6ce03a" strokeWidth="1.500" /></Draw>
      <Draw w={16}><circle cx="8" cy="8" r="7" fill={l} stroke={b} /><path d="M8 4h4l4 4.500-4 5-4 .5 2.500-4.500z" fill="#8ee04a" stroke="#2f8a1c" /></Draw>
      <Draw w={16}><rect x="1" y="1" width="14" height="14" rx="2" fill={l} stroke={b} strokeWidth="1.200" /><path d="M6.500 4h3v4H12l-4 4.500L4 8h2.500z" fill="#0b3f86" /></Draw>
    </>
  );
};

export default function App() {
  return (
    <Desktop>
      <Global />
      <GradientDefs />
      <MacBar>
        <Glyph $w={16}><FaApple size={17} /></Glyph>
        <MenuItem $w={62} $strong>Finder</MenuItem>
        <MenuItem $w={61}>Fichier</MenuItem>
        <MenuItem $w={62}>Édition</MenuItem>
        <MenuItem $w={97}>Présentation</MenuItem>
        <MenuItem $w={48}>Aller</MenuItem>
        <MenuItem $w={67}>Fenêtre</MenuItem>
        <MenuItem $w={40}>Aide</MenuItem>
        <Spacer />
        <MacBarIcons />
        <Label $font={mac} $size={13} $ls={0.12} $weight={500} $w={118} $ml={16}>Lun. 9 jan. à&nbsp; 17:50</Label>
      </MacBar>

      <VmWindow>
        <TitleBar>
          <Lights><Light /><Light /><Light /></Lights>
          <Label $font={mac} $size={13} $ls={0.12} $weight={600} $color="#b3b3b3">UbuntuKZM [Running]</Label>
          <span />
        </TitleBar>

        <GnomeBar>
          <GnomeSide>
            <Label $size={14.600} $ls={0.1} $w={92.500}>Activités</Label>
            <Glyph $w={16}><FaFirefoxBrowser size={16} color="#f2f2f2" /></Glyph>
            <Label $size={14.600} $ls={-0.2} $w={161} $ml={6.500}>Navigateur Web Firefox</Label>
            <Caret />
          </GnomeSide>
          <GnomeClock>
            <Label $size={14} $w={42}>17:50</Label>
            <Label $size={14} $w={12}>9</Label>
            <Label $size={14} $w={38} $font={`"DejaVu Sans", sans-serif`}>يناير</Label>
            <Draw w={8}><circle cx="4" cy="4" r="4" fill="#fff" /></Draw>
          </GnomeClock>
          <GnomeSide $end>
            <Label $size={15}>fr<LayoutIndex>1</LayoutIndex></Label>
            <Glyph $w={10} $ml={6}><Caret w={9} /></Glyph>
            <Glyph $w={16} $ml={32}>
              <Draw w={16}><path d="M5.500 0h5v5h-5zM0 11h5v5H0zM11 11h5v5h-5z" fill="#fff" /><path d="M8 5v3M2.500 11V8.300h11V11" stroke="#fff" strokeWidth="1.300" /></Draw>
            </Glyph>
            <Glyph $w={16} $ml={12}>
              <Draw w={16}><path d="M1 5.500h3l4-4v13l-4-4H1z" fill="#fff" /><path d="M10 5.500c1.500 1.500 1.500 3.500 0 5" stroke="#ddd" strokeWidth="1.300" /><path d="M12 3c3 3 3 7 0 10" stroke="#888" strokeWidth="1.200" /></Draw>
            </Glyph>
            <Glyph $w={16} $ml={12}>
              <Draw w={16}><path d="M8 0v8M4.500 2.500a6.300 6.300 0 1 0 7 0" stroke="#eee" strokeWidth="1.300" /></Draw>
            </Glyph>
            <Glyph $w={10} $ml={10}><Caret /></Glyph>
          </GnomeSide>
        </GnomeBar>

        <Workspace>
          <Launcher>
            <LauncherTile $active $running><FirefoxLogo size={46} /></LauncherTile>
            <LauncherTile><FilesIcon /></LauncherTile>
            <LauncherTile><RhythmIcon /></LauncherTile>
            <LauncherTile><WriterIcon /></LauncherTile>
            <LauncherTile $lift={6}><SoftwareIcon /></LauncherTile>
            <LauncherTile $running><PyCharmUbuntu /></LauncherTile>
            <LauncherTile><Postgres /></LauncherTile>
            <LauncherTile><TerminalIcon /></LauncherTile>
            <LauncherTile><DiscIcon /></LauncherTile>
            <Spacer />
            <AppsGrid>{Array.from({ length: 9 }, (_, i) => <AppsDot key={i} />)}</AppsGrid>
          </Launcher>

          <Browser>
            <TabStrip>
              <PinnedTab><FirefoxLogo size={16} /></PinnedTab>
              <Tab>
                <OdooRing />
                <TabTitle><Label $size={14.500} $ls={-0.2}>Odoo - Sales Orders</Label></TabTitle>
                <Cross c="#eee" />
              </Tab>
              <Tab>
                <TabTitle><Label $size={14.500} $ls={-0.12}>Order - S00016-4.pdf</Label></TabTitle>
                <Cross c="#eee" />
              </Tab>
              <Tab>
                <OdooRing />
                <TabTitle><Label $size={14.500} $ls={-0.18}>Odoo - Odoo Version</Label></TabTitle>
                <Cross c="#eee" />
              </Tab>
              <Tab $active>
                <TabTitle $fade><Label $size={14.500} $ls={-0.2} $color="#333">Odoo Report - Instance Docu</Label></TabTitle>
                <Cross c="#444" />
              </Tab>
              <Tab>
                <TabTitle $fade><Label $size={14.500} $ls={-0.2}>Odoo Report - Instance Docu</Label></TabTitle>
                <Cross c="#eee" />
              </Tab>
              <Glyph $w={12} $ml={16}><Draw w={12}><path d="M6 0v12M0 6h12" stroke="#eee" strokeWidth="1.300" /></Draw></Glyph>
              <Spacer />
              <Glyph $w={14}><Chevron c="#eee" /></Glyph>
              <Glyph $w={12} $ml={61}><Draw w={8} h={8}><path d="M0 7.500h8" stroke="#fff" /></Draw></Glyph>
              <Glyph $w={12} $ml={22}><Draw w={8}><path d="M.600 2.600h4.800v4.800H.600z" stroke="#fff" strokeWidth="1.200" /><path d="M2.500.500h5V6" stroke="#aaa" /></Draw></Glyph>
              <Glyph $w={18} $ml={19}><CloseDisc><Cross c="#fff" s={9} /></CloseDisc></Glyph>
            </TabStrip>

            <NavBar>
              <Glyph $w={16} $ml={15}><Draw w={15} h={14}><path d="M15 7H1M7 1 1 7l6 6" stroke="#b3b3b5" strokeWidth="1.300" /></Draw></Glyph>
              <Glyph $w={16} $ml={20}><Draw w={15} h={14}><path d="M0 7h14M8 1l6 6-6 6" stroke="#b3b3b5" strokeWidth="1.300" /></Draw></Glyph>
              <Glyph $w={16} $ml={20}><Draw w={15}><path d="M13.200 9.500A6.300 6.300 0 1 1 12 3.200" stroke="#333" strokeWidth="1.500" /><path d="M14.500.500V6H9z" fill="#333" /></Draw></Glyph>
              <UrlField>
                <Glyph $w={16}><Draw w={15} h={16}><path d="M7.500.800 13.800 4c0 5-1 8.500-6.300 11.200C2.200 12.500 1.200 9 1.200 4z" stroke="#333" strokeWidth="1.400" strokeLinejoin="round" /></Draw></Glyph>
                <Glyph $w={14} $ml={13}><Draw w={12} h={15}><path d="M1 1h6.500L11 4.500V14H1z" stroke="#333" strokeWidth="1.600" strokeLinejoin="round" /><path d="M7 1v4h4z" fill="#333" /></Draw></Glyph>
                <Label $size={15} $ml={11} $color="#111">file:///home/zakaria2001/Téléchargements/Instance Document-1.pdf</Label>
                <Spacer />
                <Draw w={16}><path d="m8 1 2.100 4.600 4.900.600-3.600 3.400.900 5L8 12.200l-4.300 2.400.9-5L1 6.200l4.900-.600z" stroke="#222" strokeWidth="1.400" strokeLinejoin="round" /></Draw>
              </UrlField>
              <Spacer />
              <Glyph $w={16}><Draw w={15} h={14}><path d="M2.500 1h10A1.500 1.500 0 0 1 14 2.500V6c0 4-3 7-6.500 7S1 10 1 6V2.500A1.500 1.500 0 0 1 2.500 1zM4.300 5l3.200 3 3.200-3" stroke="#444" strokeWidth="1.300" /></Draw></Glyph>
              <Glyph $w={16} $ml={20}><Draw w={15} h={16}><path d="M7.500 0v10.500M3.500 6.500l4 4 4-4M1 11v2.500A1.500 1.500 0 0 0 2.500 15h10a1.500 1.500 0 0 0 1.500-1.500V11" stroke="#444" strokeWidth="1.300" /></Draw></Glyph>
              <Glyph $w={16} $ml={20}><Draw w={13} h={12}><path d="M0 1.500h13M0 6.500h13M0 11.500h13" stroke="#444" /></Draw></Glyph>
            </NavBar>

            <PdfBar>
              <Glyph $w={16} $ml={8}><Draw w={16} h={13}><rect x=".6" y=".6" width="14.800" height="11.800" rx="1.500" stroke="#444" strokeWidth="1.200" /><path d="M7 .500v12M2.300 3.500H5M2.300 6H5M2.300 8.500H5" stroke="#444" strokeWidth="1.200" /></Draw></Glyph>
              <Glyph $w={14} $ml={46}><Chevron c="#a9a9ab" up /></Glyph>
              <Rule $ml={7} />
              <Glyph $w={14} $ml={7}><Chevron c="#a9a9ab" /></Glyph>
              <PageInput><Label $size={14} $color="#111">1</Label></PageInput>
              <Label $size={12} $ls={-0.3} $ml={5} $color="#222">sur 1</Label>
              <Spacer />
              <Glyph $w={12}><Draw w={12} h={12}><path d="M0 6.500h12" stroke="#444" /></Draw></Glyph>
              <Rule $ml={8} />
              <Glyph $w={12} $ml={7}><Draw w={12}><path d="M6 0v12M0 6h12" stroke="#444" strokeWidth="1.300" /></Draw></Glyph>
              <ZoomSelect>
                <Label $size={12} $ls={-0.28} $color="#111">Zoom automatique</Label>
                <Chevron c="#222" w={9} />
              </ZoomSelect>
              <Spacer $w={667} />
              <Glyph $w={16}><Draw w={14} h={16}><path d="M3.500 5V1h7v4" stroke="#444" strokeWidth="1.300" /><rect y="4.500" width="14" height="8" rx="2" fill="#444" /><rect x="3.500" y="9.500" width="7" height="6" fill="#fff" stroke="#444" strokeWidth="1.200" /></Draw></Glyph>
              <Glyph $w={16} $ml={14}><Draw w={16} h={14}><path d="M6.500 13H2A1.300 1.300 0 0 1 .7 11.700V2.300A1.300 1.300 0 0 1 2 1h3.500L7 2.500h3M13 2.500h1.500a1 1 0 0 1 1 1v8.200a1.300 1.300 0 0 1-1.300 1.300H6" stroke="#444" strokeWidth="1.200" /><path d="M11 1v8M8 6.500l3 3 3-3" stroke="#444" strokeWidth="1.400" /></Draw></Glyph>
              <Rule $ml={9} $h={22} />
              <Glyph $w={12} $ml={12}><Draw w={9} h={15}><path d="M0 .700h3c1 0 1.500.400 1.500 1.300C4.500 1.100 5 .700 6 .700h3M4.500 1.500v12M0 14.300h3c1 0 1.500-.400 1.500-1.300 0 .9.500 1.300 1.500 1.300h3" stroke="#444" strokeWidth="1.200" /></Draw></Glyph>
              <Glyph $w={16} $ml={13}><Draw w={15} h={15}><path d="m2 12 1-4 7-7 2.500 2.500-7 7zM8.500 2.500 11 5M1 14.300c2-1.500 3 .500 5 0s3-1 7 0" stroke="#444" strokeWidth="1.200" /></Draw></Glyph>
              <Rule $ml={11} $h={22} />
              <Glyph $w={14} $ml={10}><Draw w={13} h={12}><path d="m1 0 5 6-5 6M7 0l5 6-5 6" stroke="#444" strokeWidth="1.200" /></Draw></Glyph>
            </PdfBar>

            <Viewer>
              <Sheet>
                <LogoBox>
                  <Draw w={22} h={20}><path d="M3 5h4l1.500-2h7L17 5h5v15H3zM4 0v3H0v2h4v3h2V5h2V3H6V0z" fill="#666" /><circle cx="12.500" cy="12" r="4.500" stroke="#fff" strokeWidth="2" /></Draw>
                  <Label $font={lato} $size={26.500} $ls={0.95} $weight={900} $ml={11} $color="#676767">Your logo</Label>
                </LogoBox>
                <Divider />
                <DocLine $ls={0.2}>YourCompany</DocLine>
                <DocLine $ls={-0.1}>250 Executive Park Blvd, Suite 3400</DocLine>
                <DocLine>San Francisco CA 94134</DocLine>
                <DocLine>United States</DocLine>
                <CustomerRow><DocLine $bold>Customer :</DocLine></CustomerRow>
                <RequestRow>
                  <DocLine $bold>Request Number :</DocLine>
                  <DocLine>INST00095</DocLine>
                </RequestRow>
                <InfoGrid>
                  <div><DocLine $bold>Odoo Version :</DocLine><DocLine>14.0</DocLine></div>
                  <div><DocLine $bold>TL :</DocLine><DocLine>Eli Lambert</DocLine></div>
                  <div><DocLine $bold>Date Limit :</DocLine><DocLine $ls={-0.22}>01/11/2023</DocLine></div>
                </InfoGrid>
                <SpecTable>
                  <thead>
                    <tr><Th $w={193} $left>CPU</Th><Th $w={216}>RAM</Th><Th $w={216}>DISK</Th><Th $w={185}>URL</Th><Th $w={112}>IP</Th></tr>
                  </thead>
                  <tbody>
                    <tr><Td $left>2</Td><Td /><Td>256</Td><Td /><Td /></tr>
                  </tbody>
                </SpecTable>
              </Sheet>
            </Viewer>
          </Browser>
        </Workspace>

        <StatusBar>
          <VmStatusIcons />
          <Label $font={mac} $size={13} $color="#111" $w={39}>Left ⌘</Label>
        </StatusBar>
      </VmWindow>

      <DockArea>
        <DockShelf>
          <DockSlot $dot={24}><Finder /></DockSlot>
          <DockSlot><Launchpad /></DockSlot>
          <DockSlot><Safari /></DockSlot>
          <DockSlot $dot={24}><Chrome /></DockSlot>
          <DockSlot><Messages /></DockSlot>
          <DockSlot><Mail /></DockSlot>
          <DockSlot><Maps /></DockSlot>
          <DockSlot><Photos /></DockSlot>
          <DockSlot><FaceTime /></DockSlot>
          <DockSlot><Calendar /></DockSlot>
          <DockSlot><Contacts /></DockSlot>
          <DockSlot><Reminders /></DockSlot>
          <DockSlot><Notes /></DockSlot>
          <DockSlot><AppleTv /></DockSlot>
          <DockSlot><Music /></DockSlot>
          <DockSlot><Podcasts /></DockSlot>
          <DockSlot><AppStore /></DockSlot>
          <DockSlot><Settings /><Badge>1</Badge></DockSlot>
          <DockSlot><PyCharmDock /></DockSlot>
          <DockRule $ml={24} />
          <DockSlot $dot={24} $ml={22} $raise={5}><VirtualBox /></DockSlot>
          <DockSlot $dot={29} $ml={11} $raise={5}><MiniWindow /></DockSlot>
          <DockRule $ml={28} />
          <DockSlot $ml={22} $raise={5}><Trash /></DockSlot>
        </DockShelf>
      </DockArea>
    </Desktop>
  );
}
